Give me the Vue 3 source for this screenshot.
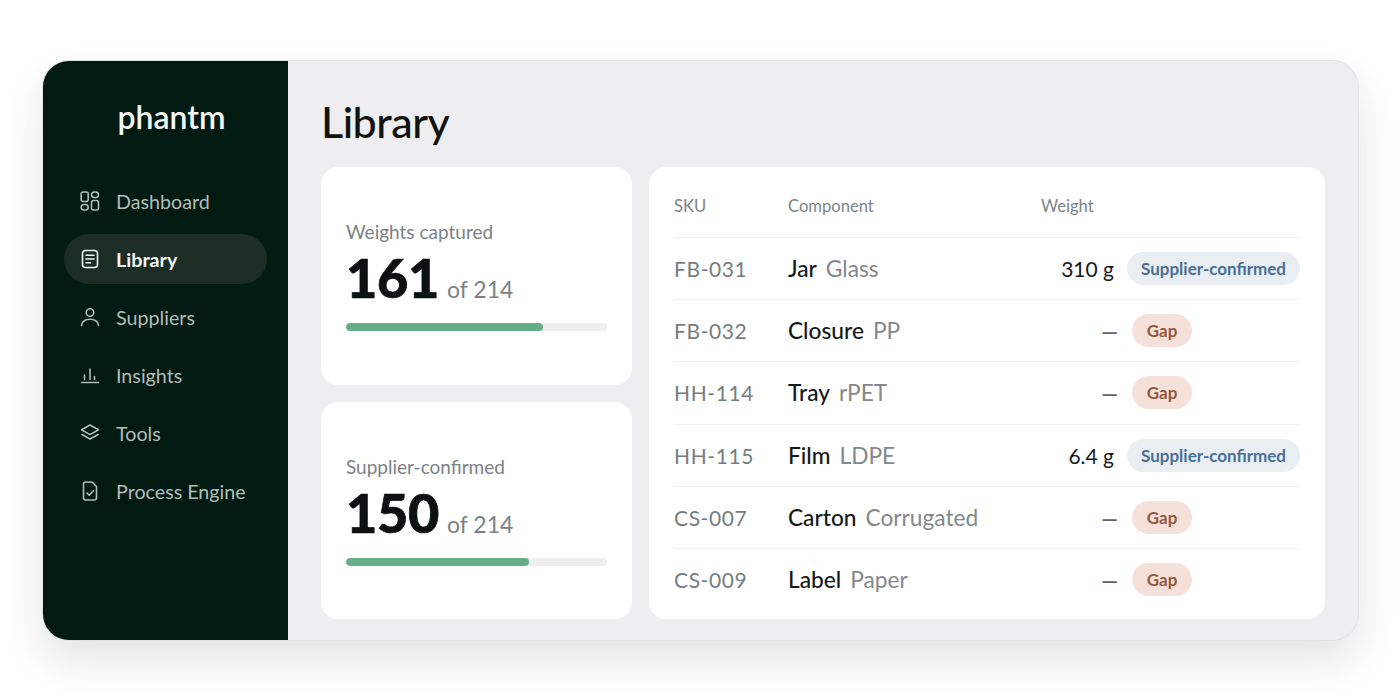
<script setup>
const navItems = [
  { label: "Dashboard", icon: "grid" },
  { label: "Library", icon: "doc", active: true },
  { label: "Suppliers", icon: "user" },
  { label: "Insights", icon: "chart" },
  { label: "Tools", icon: "layers" },
  { label: "Process Engine", icon: "check" },
];

const stats = [
  { label: "Weights captured", value: 161, total: 214, fill: 75.5 },
  { label: "Supplier-confirmed", value: 150, total: 214, fill: 70 },
];

const rows = [
  { sku: "FB-031", name: "Jar", material: "Glass", weight: "310 g" },
  { sku: "FB-032", name: "Closure", material: "PP" },
  { sku: "HH-114", name: "Tray", material: "rPET" },
  { sku: "HH-115", name: "Film", material: "LDPE", weight: "6.4 g" },
  { sku: "CS-007", name: "Carton", material: "Corrugated" },
  { sku: "CS-009", name: "Label", material: "Paper" },
];
</script>

<template>
  <div class="page">
    <div class="frame">
      <aside class="sidebar">
        <div class="logo">phantm</div>
        <nav class="nav">
          <div
            v-for="item in navItems"
            :key="item.label"
            class="nav-item"
            :class="{ active: item.active }"
          >
            <svg class="nav-icon" viewBox="0 0 20 20" fill="none" stroke="currentColor" stroke-width="1.6" stroke-linecap="round" stroke-linejoin="round">
              <template v-if="item.icon === 'grid'">
                <rect x="1.2" y="1" width="7" height="9.5" rx="2" />
                <rect x="11.5" y="1" width="7" height="5.5" rx="2.7" />
                <rect x="1.2" y="13.5" width="7" height="5.5" rx="2.7" />
                <rect x="11.5" y="9.5" width="7" height="9.5" rx="2" />
              </template>
              <template v-else-if="item.icon === 'doc'">
                <rect x="2.5" y="1.5" width="15" height="17" rx="3" />
                <path d="M6 6.3h8M6 10h8M6 13.7h4.5" />
              </template>
              <template v-else-if="item.icon === 'user'">
                <circle cx="10" cy="5.5" r="3.8" />
                <path d="M1.5 18.5c.6-4.2 4-6.2 8.5-6.2s7.900 2 8.500 6.200" />
              </template>
              <template v-else-if="item.icon === 'chart'">
                <path d="M1.500 17.500h17M4.500 14.500v-4.500M10 14.500V4M14.500 14.500v-3" />
              </template>
              <template v-else-if="item.icon === 'layers'">
                <path d="M10 2l8.500 4.800-8.500 4.800-8.500-4.800z" />
                <path d="M2 11.500l8 4.500 8-4.500" />
              </template>
              <template v-else>
                <path d="M5.500 1h6.500l4.500 4.500v11.500a2 2 0 0 1-2 2h-9a2 2 0 0 1-2-2v-14a2 2 0 0 1 2-2z" />
                <path d="M7 12l2.200 2.200 4-4.400" />
              </template>
            </svg>
            <span>{{ item.label }}</span>
          </div>
        </nav>
      </aside>

      <main class="main">
        <h1 class="title">Library</h1>
        <div class="content">
          <div class="stats">
            <section v-for="stat in stats" :key="stat.label" class="card stat">
              <div class="stat-label">{{ stat.label }}</div>
              <div class="stat-figure">
                <span class="stat-value">{{ stat.value }}</span>
                <span class="stat-total">of {{ stat.total }}</span>
              </div>
              <div class="bar">
                <div class="bar-fill" :style="{ width: stat.fill + '%' }"></div>
              </div>
            </section>
          </div>

          <section class="card table">
            <div class="row head">
              <div>SKU</div>
              <div>Component</div>
              <div>Weight</div>
            </div>
            <div v-for="row in rows" :key="row.sku" class="row">
              <div class="sku">{{ row.sku }}</div>
              <div class="component">
                <span class="name">{{ row.name }}</span>
                <span class="material">{{ row.material }}</span>
              </div>
              <div class="weight-cell">
                <span v-if="row.weight" class="weight">{{ row.weight }}</span>
                <span v-else class="weight none">—</span>
                <span v-if="row.weight" class="badge confirmed">Supplier-confirmed</span>
                <span v-else class="badge gap">Gap</span>
              </div>
            </div>
          </section>
        </div>
      </main>
    </div>
  </div>
</template>

<style>
html,
body {
  margin: 0;
  background: #fff;
}
</style>

<style scoped>
.page {
  width: 1400px;
  height: 700px;
  box-sizing: border-box;
  padding: 61px 42px 60px 43px;
  font-family: Lato, "Noto Sans", sans-serif;
  overflow: hidden;
}

.frame {
  display: flex;
  height: 100%;
  border-radius: 26px;
  overflow: hidden;
  background: #eeeef0;
  box-shadow: 0 0 0 1px #e2e3e4, 0 20px 40px rgba(20, 30, 25, 0.12);
}

.sidebar {
  width: 245px;
  flex: none;
  background: #011a12;
  box-sizing: border-box;
  padding: 0 21px;
}

.logo {
  margin-top: 35px;
  padding-left: 12px;
  text-align: center;
  color: #f6f8f7;
  font-size: 32px;
  font-weight: 600;
  line-height: 42px;
}

.nav {
  margin-top: 38px;
  display: flex;
  flex-direction: column;
  gap: 8px;
}

.nav-item {
  display: flex;
  align-items: center;
  gap: 16px;
  height: 50px;
  padding-left: 16px;
  border-radius: 25px;
  color: #b4bcb8;
  font-size: 19.7px;
}

.nav-item.active {
  background: #1c2d25;
  color: #f4f6f5;
  font-weight: 700;
}

.nav-icon {
  width: 20px;
  height: 20px;
  flex: none;
}

.main {
  flex: 1;
  min-width: 0;
  box-sizing: border-box;
  padding: 0 33px 21px;
  display: flex;
  flex-direction: column;
}

.title {
  margin: 36px 0 0;
  font-size: 43px;
  font-weight: 500;
  line-height: 50px;
  letter-spacing: -0.5px;
  color: #101312;
}

.content {
  flex: 1;
  min-height: 0;
  margin-top: 20px;
  display: flex;
  gap: 17px;
}

.card {
  background: #fff;
  border-radius: 17px;
}

.stats {
  width: 311px;
  flex: none;
  display: flex;
  flex-direction: column;
  gap: 17px;
}

.stat {
  flex: 1;
  display: flex;
  flex-direction: column;
  justify-content: center;
  padding: 0 25px;
}

.stat-label {
  font-size: 19px;
  line-height: 24px;
  color: #7b8285;
}

.stat-figure {
  display: flex;
  align-items: baseline;
  gap: 8px;
  margin-top: 3px;
}

.stat-value {
  font-size: 54px;
  font-weight: 900;
  line-height: 62px;
  letter-spacing: -0.3px;
  -webkit-text-stroke: 0.7px #0e1111;
  color: #0e1111;
}

.stat-total {
  font-size: 23px;
  color: #7b8285;
}

.bar {
  margin-top: 14px;
  height: 8px;
  border-radius: 4px;
  background: #eeeeef;
  overflow: hidden;
}

.bar-fill {
  height: 100%;
  border-radius: 4px;
  background: #65ae86;
}

.table {
  flex: 1;
  min-width: 0;
  padding: 8px 25px 0;
}

.row {
  display: grid;
  grid-template-columns: 114px 253px 1fr;
  align-items: center;
  height: 62.2px;
  border-top: 1px solid #f0f0f1;
  box-sizing: border-box;
  font-size: 21px;
}

.row.head {
  height: 62px;
  border-top: 0;
  font-size: 16.6px;
  color: #7d8487;
}

.sku {
  color: #767d80;
  letter-spacing: 0.6px;
}

.component {
  display: flex;
  gap: 9px;
  font-size: 22.7px;
}

.name {
  color: #15191a;
  font-weight: 500;
}

.material {
  color: #82888b;
}

.weight-cell {
  display: flex;
  align-items: center;
}

.weight {
  width: 73px;
  text-align: right;
  color: #15191a;
  white-space: nowrap;
}

.weight.none {
  width: 77px;
  font-weight: 700;
  color: #5c6463;
}

.badge {
  display: flex;
  align-items: center;
  justify-content: center;
  height: 33px;
  border-radius: 17px;
  font-size: 17px;
  font-weight: 700;
}

.badge.confirmed {
  width: 173px;
  margin-left: 13px;
  background: #e9eef2;
  color: #4a6f96;
}

.badge.gap {
  width: 60px;
  margin-left: 14px;
  background: #f5e1da;
  color: #97573a;
}
</style>
